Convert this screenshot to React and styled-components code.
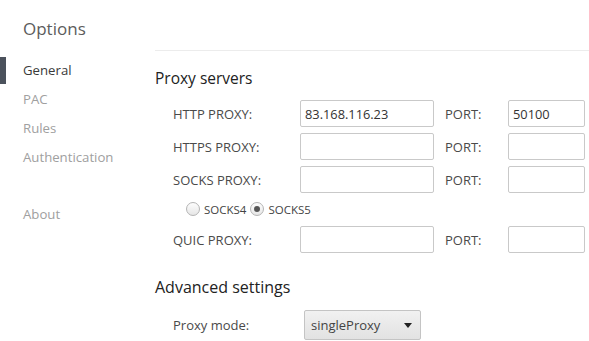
import React from "react";
import styled, { createGlobalStyle } from "styled-components";

const Global = createGlobalStyle`
  html, body { margin: 0; padding: 0; background: #fff; }
  body { font-family: "Open Sans", "Noto Sans", sans-serif; }
  * { box-sizing: border-box; }
`;

const Page = styled.div`
  display: flex;
  width: 589px;
  height: 341px;
  overflow: hidden;
`;

const Sidebar = styled.nav`
  width: 155px;
  flex: none;
  padding-top: 16px;
  display: flex;
  flex-direction: column;
`;

const Title = styled.h1`
  margin: 0 0 13.5px 23px;
  font-size: 17px;
  line-height: 26px;
  font-weight: 400;
  color: #5c5c5c;
`;

const NavItem = styled.div`
  height: 29px;
  line-height: 29px;
  padding-left: 23px;
  font-size: 13.2px;
  color: ${(p) => (p.$active ? "#3a3a3a" : "#a0a0a0")};
  margin-top: ${(p) => (p.$gap ? "28px" : "0")};
  background: ${(p) =>
    p.$active
      ? "linear-gradient(#4b525c, #4b525c) no-repeat 0 center / 6px 27px"
      : "none"};
`;

const Main = styled.main`
  flex: 1;
  margin-top: 50px;
  border-top: 1px solid #ececec;
  padding-top: 16px;
`;

const Heading = styled.h2`
  margin: 0;
  font-size: ${(p) => p.$size || 15.5}px;
  line-height: 22px;
  font-weight: 400;
  color: #222;
`;

const Rows = styled.div`
  display: flex;
  flex-direction: column;
  gap: 6px;
  margin-top: 11px;
  padding-left: 18px;
`;

const Row = styled.div`
  display: flex;
  align-items: center;
  height: 27px;
`;

const Label = styled.span`
  width: ${(p) => p.$w}px;
  flex: none;
  font-size: 13px;
  color: #4a4a4a;
`;

const Input = styled.input`
  width: ${(p) => p.$w}px;
  height: 27px;
  flex: none;
  border: 1px solid #c9c9c9;
  border-radius: 2px;
  padding: 0 4px;
  font: inherit;
  font-size: 12.8px;
  color: #333;
  margin-right: ${(p) => p.$mr || 0}px;
  outline: none;
`;

const RadioRow = styled.div`
  display: flex;
  align-items: center;
  height: 21px;
  padding-left: 13px;
  font-size: 11.5px;
  color: #444;
`;

const RadioDot = styled.span`
  width: 14px;
  height: 14px;
  border-radius: 50%;
  border: 1px solid #b4b4b4;
  background: linear-gradient(#fdfdfd, #e6e6e6);
  display: inline-flex;
  align-items: center;
  justify-content: center;
  margin-right: 4px;
  margin-top: -2px;
  &::after {
    content: "";
    width: 6px;
    height: 6px;
    border-radius: 50%;
    background: ${(p) => (p.$checked ? "#555" : "transparent")};
  }
`;

const RadioLabel = styled.span`
  margin-right: 4px;
`;

const Section = styled.div`
  margin-top: 23px;
`;

const SelectRow = styled.div`
  display: flex;
  align-items: center;
  margin-top: 12px;
  padding-left: 18px;
`;

const Select = styled.div`
  width: 117px;
  height: 30px;
  border: 1px solid #c4c4c4;
  border-radius: 2px;
  background: linear-gradient(#f1f1f1, #e2e2e2);
  display: flex;
  align-items: center;
  justify-content: space-between;
  padding: 0 8px 0 6px;
  font-size: 13px;
  color: #444;
`;

const Arrow = styled.span`
  width: 0;
  height: 0;
  border-left: 4px solid transparent;
  border-right: 4px solid transparent;
  border-top: 5px solid #222;
`;

const proxies = [
  { label: "HTTP PROXY:", host: "83.168.116.23", port: "50100" },
  { label: "HTTPS PROXY:", host: "", port: "" },
  { label: "SOCKS PROXY:", host: "", port: "" },
];

function ProxyRow({ label, host, port }) {
  return (
    <Row>
      <Label $w={127}>{label}</Label>
      <Input $w={134} $mr={11} defaultValue={host} />
      <Label $w={63}>PORT:</Label>
      <Input $w={77} defaultValue={port} />
    </Row>
  );
}

export default function App() {
  return (
    <>
      <Global />
      <Page>
        <Sidebar>
          <Title>Options</Title>
          <NavItem $active>General</NavItem>
          <NavItem>PAC</NavItem>
          <NavItem>Rules</NavItem>
          <NavItem>Authentication</NavItem>
          <NavItem $gap>About</NavItem>
        </Sidebar>
        <Main>
          <Heading>Proxy servers</Heading>
          <Rows>
            {proxies.map((p) => (
              <ProxyRow key={p.label} {...p} />
            ))}
            <RadioRow>
              <RadioDot />
              <RadioLabel>SOCKS4</RadioLabel>
              <RadioDot $checked />
              <RadioLabel>SOCKS5</RadioLabel>
            </RadioRow>
            <ProxyRow label="QUIC PROXY:" host="" port="" />
          </Rows>
          <Section>
            <Heading $size={16}>Advanced settings</Heading>
            <SelectRow>
              <Label $w={131}>Proxy mode:</Label>
              <Select>
                <span>singleProxy</span>
                <Arrow />
              </Select>
            </SelectRow>
          </Section>
        </Main>
      </Page>
    </>
  );
}
